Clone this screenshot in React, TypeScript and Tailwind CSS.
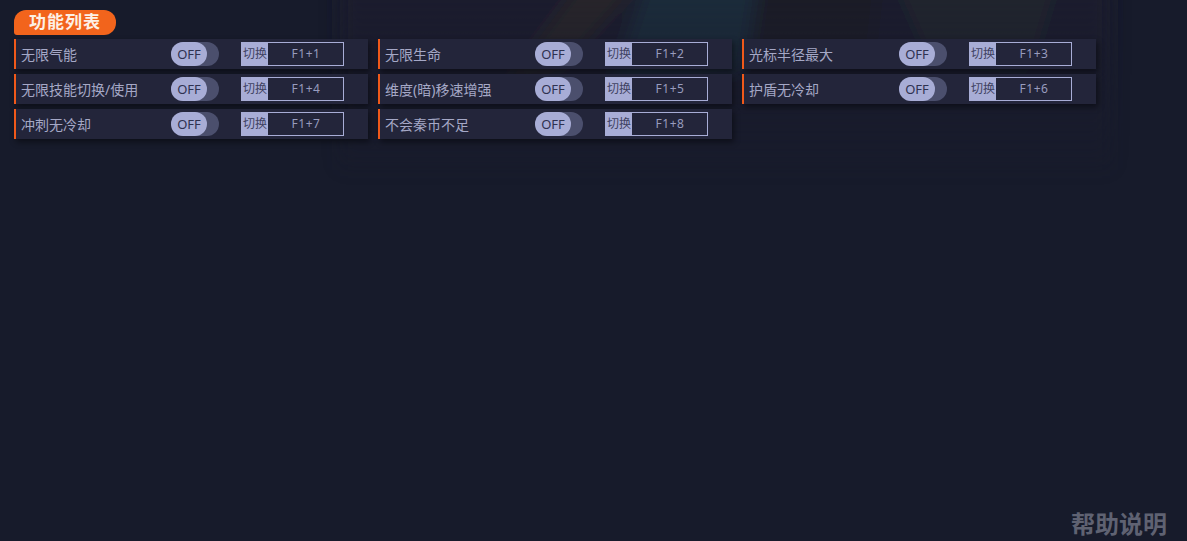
import React from 'react';

interface Feature {
  name: string;
  hotkey: string;
}

const FEATURES: Feature[] = [
  { name: '无限气能', hotkey: 'F1+1' },
  { name: '无限生命', hotkey: 'F1+2' },
  { name: '光标半径最大', hotkey: 'F1+3' },
  { name: '无限技能切换/使用', hotkey: 'F1+4' },
  { name: '维度(暗)移速增强', hotkey: 'F1+5' },
  { name: '护盾无冷却', hotkey: 'F1+6' },
  { name: '冲刺无冷却', hotkey: 'F1+7' },
  { name: '不会秦币不足', hotkey: 'F1+8' },
];

const FONT = "font-['Microsoft_YaHei','Noto_Sans','Noto_Sans_CJK_SC',sans-serif]";

// Faint game artwork behind the list
const Backdrop = () => (
  <svg className="absolute inset-0 w-full h-full" viewBox="0 0 1187 541" aria-hidden="true">
    <defs>
      <filter id="soft" x="-30%" y="-30%" width="160%" height="160%">
        <feGaussianBlur stdDeviation="9" />
      </filter>
      <linearGradient id="fade" x1="0" y1="0" x2="0" y2="1">
        <stop offset="0" stopColor="#fff" />
        <stop offset="0.5" stopColor="#fff" stopOpacity="0.45" />
        <stop offset="1" stopColor="#fff" stopOpacity="0" />
      </linearGradient>
      <mask id="fadeMask">
        <rect y="-30" width="1187" height="230" fill="url(#fade)" />
      </mask>
    </defs>
    <g mask="url(#fadeMask)">
      <g filter="url(#soft)">
        <path d="M340 -30 L1110 -30 L1110 170 L340 170 Z" fill="#1b1e2d" />
        <path d="M590 -30 L650 -30 L560 70 L500 90 Z" fill="#2a2829" />
        <path d="M650 -30 L760 -30 L745 70 L610 90 Z" fill="#1f2d3c" />
        <path d="M760 -30 L880 -30 L870 60 L750 60 Z" fill="#1a1b26" />
        <path d="M890 -30 L1060 -30 L1030 70 L930 60 Z" fill="#24272f" />
      </g>
    </g>
  </svg>
);

const Toggle = () => (
  <div className="w-12 h-6 rounded-full bg-[#4b4f6d] shrink-0">
    <div className="w-9 h-6 rounded-full bg-[#a8add6] flex items-center justify-center text-[13px] text-[#2f3250] pt-px">
      OFF
    </div>
  </div>
);

const Hotkey = ({ value }: { value: string }) => (
  <div className="w-[103px] h-6 border border-[#a8add6] flex items-center ml-[22px] shrink-0">
    <span className="w-[27px] h-full -ml-px pl-px bg-[#a8add6] text-[12px] leading-[20px] text-[#3f4262] flex items-center justify-center shrink-0">
      切换
    </span>
    <span className="flex-1 text-center text-[12px] text-[#989cbe] tracking-[0.5px] pl-px">{value}</span>
  </div>
);

const FeatureRow = ({ feature }: { feature: Feature }) => (
  <div className="h-[30px] bg-[#23253a] border-l-2 border-[#f0591a] flex items-center pl-[5px] shadow-[2px_3px_6px_rgba(0,0,0,0.45)]">
    <span className="w-[150px] shrink-0 text-[14px] text-[#a5a8c6] whitespace-nowrap">{feature.name}</span>
    <Toggle />
    <Hotkey value={feature.hotkey} />
  </div>
);

export default function App() {
  return (
    <div className={`relative w-[1187px] h-[541px] overflow-hidden bg-[#171b2b] flex flex-col ${FONT}`}>
      <Backdrop />
      <div className="relative pt-[10px] pl-[14px]">
        <div className="w-[102px] h-[25px] pb-[2px] bg-[#f2641c] rounded-[12px] rounded-bl-[3px] flex items-center justify-center text-[17px] leading-none font-bold tracking-[1px] text-[#fdf0e6]">
          功能列表
        </div>
        <div className="grid grid-cols-[354px_354px_354px] gap-x-[10px] gap-y-[5px] mt-1">
          {FEATURES.map((f) => (
            <FeatureRow key={f.hotkey} feature={f} />
          ))}
        </div>
      </div>
      <div className="relative mt-auto self-end pr-5 pb-[3px] text-[24px] leading-[28px] font-bold text-[#5f6272]">
        帮助说明
      </div>
    </div>
  );
}
